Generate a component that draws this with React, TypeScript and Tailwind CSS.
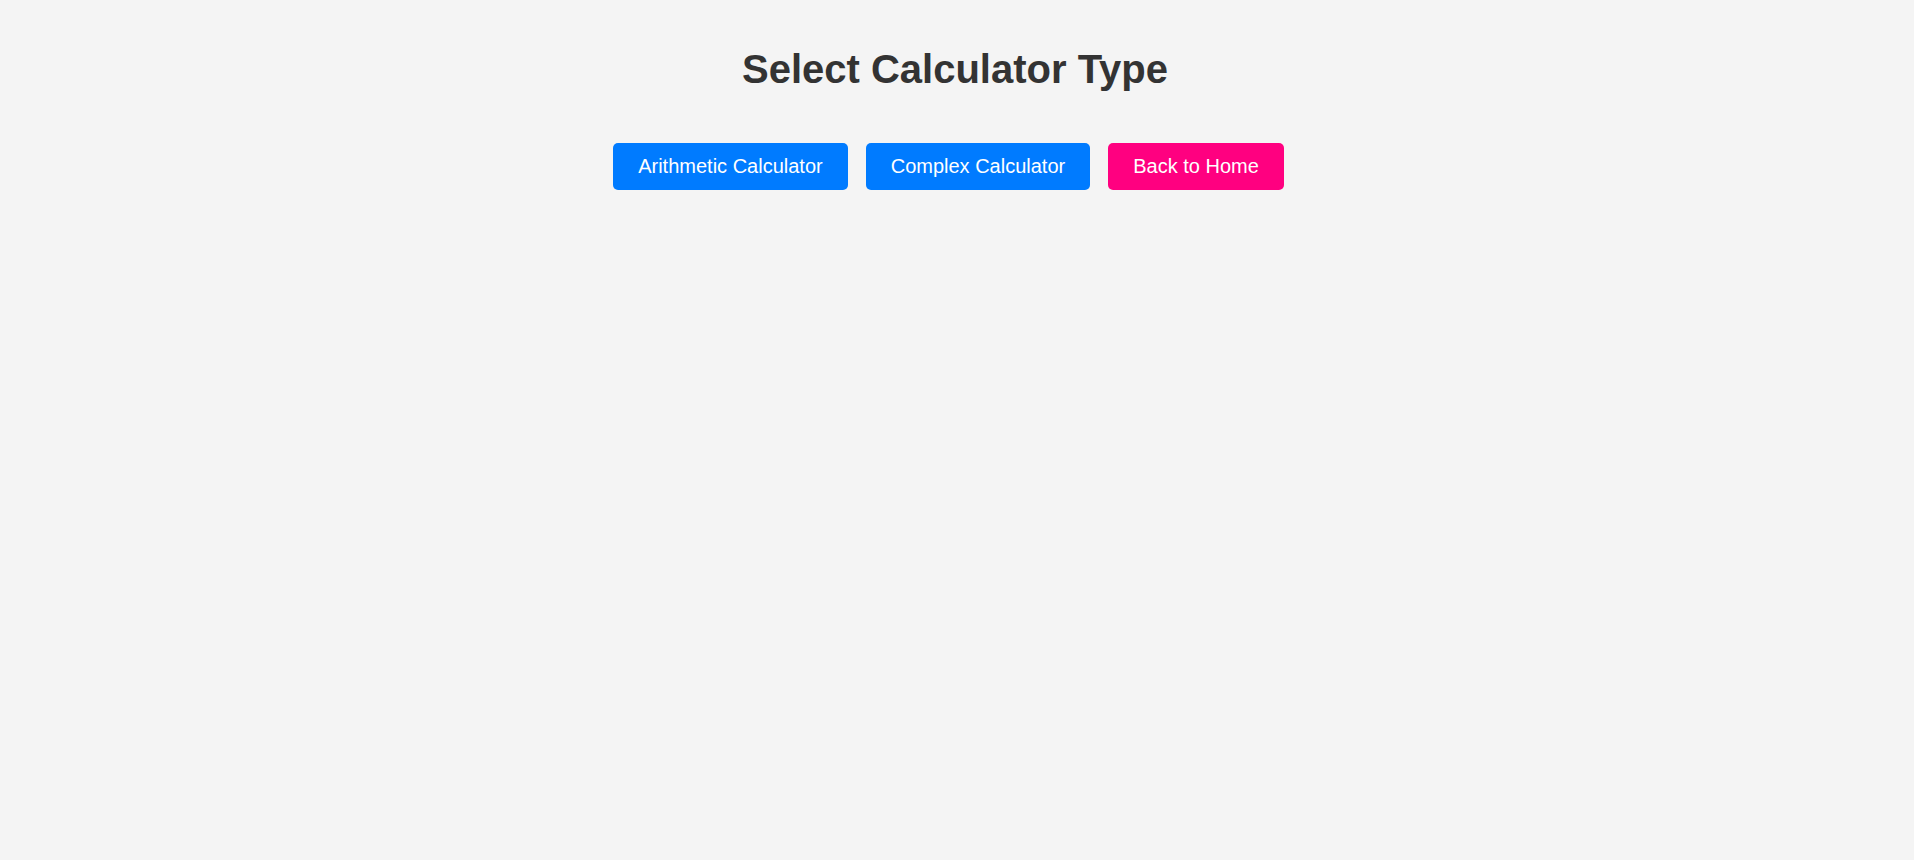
export default function App() {
  return (
    <div className="min-h-screen bg-[#f4f4f4] font-['Liberation_Sans',Arial,sans-serif] flex flex-col items-center">
      <h1 className="mt-[46px] pr-[4px] text-[40px] leading-[46px] font-bold text-[#333333]">
        Select Calculator Type
      </h1>

      {/* Buttons */}
      <div className="mt-[51px] flex gap-[18px] pr-[17px]">
        <button className="px-[25px] py-[12px] text-[20px] leading-[23px] text-white rounded-[5px] bg-[#007bff]">
          Arithmetic Calculator
        </button>
        <button className="px-[25px] py-[12px] text-[20px] leading-[23px] text-white rounded-[5px] bg-[#007bff]">
          Complex Calculator
        </button>
        <button className="px-[25px] py-[12px] text-[20px] leading-[23px] text-white rounded-[5px] bg-[#ff0080]">
          Back to Home
        </button>
      </div>
    </div>
  );
}
